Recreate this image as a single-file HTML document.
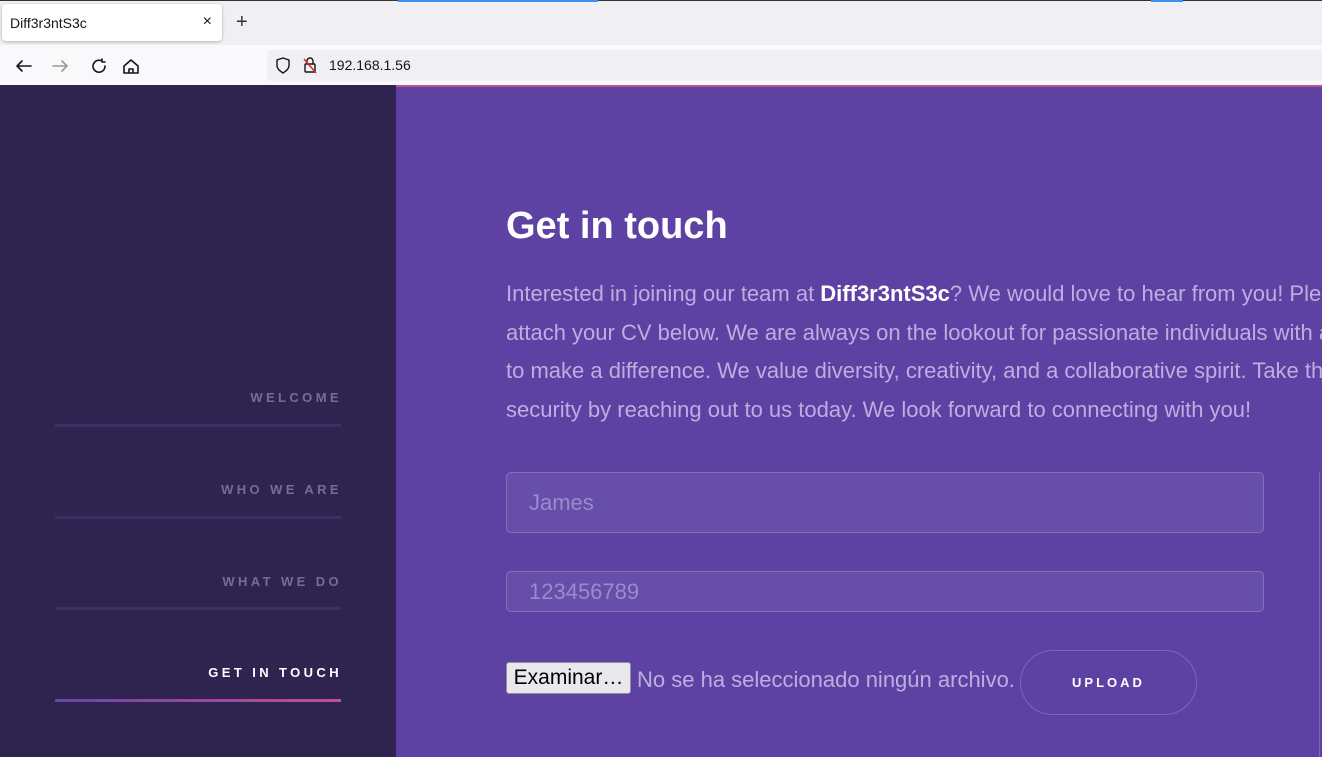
<!DOCTYPE html>
<html><head><meta charset="utf-8"><style>
*{margin:0;padding:0;box-sizing:border-box}
body{width:1322px;height:757px;overflow:hidden;font-family:"Liberation Sans",sans-serif;background:#5d42a3;position:relative}
.top{position:absolute;left:0;top:0;width:1322px;height:45px;background:#f0f0f4;border-top:1px solid #333}
.tab{position:absolute;left:2px;top:4px;width:220px;height:37px;background:#fff;border-radius:4px;box-shadow:0 1px 3px rgba(0,0,0,.25);font-size:14px;color:#15141a;padding:11px 8px}
.nav{position:absolute;left:0;top:45px;width:1322px;height:40px;background:#f9f9fb}
.url{position:absolute;left:267px;top:50px;width:1060px;height:31px;background:#f0f0f4;border-radius:4px;font-size:14px;color:#15141a;padding:7px 0 0 62px}
.pink{position:absolute;left:396px;top:85px;width:926px;height:2px;background:#c34f8f}
.side{position:absolute;left:0;top:85px;width:396px;height:672px;background:#2f2450}
.item{position:absolute;left:55px;width:287px;text-align:right;font-size:13px;font-weight:bold;letter-spacing:3.4px;color:#776c91}
.line{position:absolute;left:55px;width:286px;height:3px;background:#3c2e66}
h1{position:absolute;left:506px;top:205px;font-size:38px;color:#fff;font-weight:bold}
p{position:absolute;left:506px;top:275px;width:860px;font-size:22px;line-height:38.5px;color:#bdaee0;white-space:nowrap}
p b{color:#fff}
.in{position:absolute;left:506px;width:758px;border:1px solid #8270bd;border-radius:5px;background:#664eaa;color:#9b8bcc;font-size:22px;padding-left:22px}
.btn{position:absolute;left:506px;top:662px;width:125px;height:32px;background:#e9e9ed;border:1px solid #8f8f9d;border-radius:3px;font-size:21px;color:#000;text-align:center;line-height:30px}
.up{position:absolute;left:1020px;top:650px;width:177px;height:65px;border:1px solid #7c66bb;border-radius:33px;color:#fff;font-size:13px;font-weight:bold;letter-spacing:3px;text-align:center;line-height:63px}
</style></head><body>
<div class="top"></div>
<div style="position:absolute;left:398px;top:0;width:200px;height:2px;background:#3d8ff0"></div>
<div style="position:absolute;left:1151px;top:0;width:32px;height:2px;background:#3d8ff0"></div>
<div class="tab">Diff3r3ntS3c<span style="position:absolute;right:10px;top:9px;font-size:16px">×</span></div>
<div style="position:absolute;left:236px;top:11px;font-size:20px;color:#333">+</div>
<div class="nav"></div>
<svg style="position:absolute;left:10px;top:52px" width="140" height="28" fill="none" stroke-width="1.6" stroke-linecap="round" stroke-linejoin="round">
<path d="M7 14h14M7 14l5-5M7 14l5 5" stroke="#15141a"/>
<path d="M43 14h14M57 14l-5-5M57 14l-5 5" stroke="#999"/>
<path d="M92 9a6 6 0 1 0 3 5M92 7v3h3" stroke="#15141a"/>
<path d="M114 14l7-6 7 6v7h-14zM119 21v-4h4v4" stroke="#15141a"/>
</svg>
<div class="url">192.168.1.56</div>
<svg style="position:absolute;left:274px;top:55px" width="50" height="20" fill="none" stroke="#15141a" stroke-width="1.4"><path d="M9 3l6 2v5c0 4-3 6-6 8-3-2-6-4-6-8V5z"/><rect x="31" y="9" width="10" height="8" rx="1"/><path d="M33 9V6a3 3 0 0 1 6 0v3"/><path d="M30 4l12 14" stroke="#d22"/></svg>
<div class="pink"></div>
<div class="side">
<div class="item" style="top:305px">WELCOME</div><div class="line" style="top:339px"></div>
<div class="item" style="top:397px">WHO WE ARE</div><div class="line" style="top:431px"></div>
<div class="item" style="top:489px">WHAT WE DO</div><div class="line" style="top:522px"></div>
<div class="item" style="top:580px;color:#fff">GET IN TOUCH</div><div class="line" style="top:614px;background:linear-gradient(90deg,#6a45a8,#c24f93)"></div>
</div>
<h1>Get in touch</h1>
<p>Interested in joining our team at <b>Diff3r3ntS3c</b>? We would love to hear from you! Please<br>attach your CV below. We are always on the lookout for passionate individuals with a<br>to make a difference. We value diversity, creativity, and a collaborative spirit. Take th<br>security by reaching out to us today. We look forward to connecting with you!</p>
<div class="in" style="top:472px;height:61px;line-height:59px">James</div>
<div class="in" style="top:571px;height:41px;line-height:39px">123456789</div>
<div class="btn">Examinar…</div>
<div style="position:absolute;left:637px;top:667px;font-size:22px;color:#bdaee0">No se ha seleccionado ningún archivo.</div>
<div class="up">UPLOAD</div>
<div style="position:absolute;left:1319px;top:472px;width:1px;height:285px;background:#7a66b8"></div>
</body></html>
